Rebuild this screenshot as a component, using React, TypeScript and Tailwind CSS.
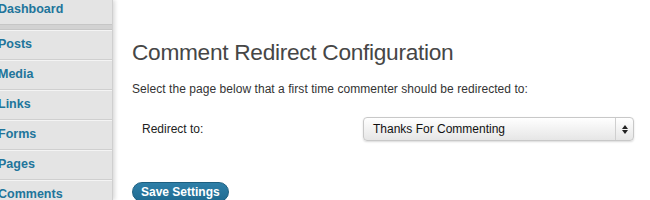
import React from 'react';

const menuItems = ['Posts', 'Media', 'Links', 'Forms', 'Pages', 'Comments'];

function Sidebar() {
  return (
    <div className="w-[113px] shrink-0 bg-[#e4e4e4] border-r border-[#cfcfcf] shadow-[2px_0_4px_rgba(0,0,0,0.15)] h-[200px] overflow-hidden">
      <div className="h-[24px] pb-[6px] flex items-center -ml-[2px] text-[12.5px] font-bold text-[#21759b]">Dashboard</div>
      <div className="h-[6px] bg-[#d2d2d2] border-t border-b border-[#c6c6c6]" />
      {menuItems.map((item) => (
        <div
          key={item}
          className="h-[30px] pb-[1px] flex items-center -ml-[2px] text-[12.5px] font-bold text-[#21759b] border-b border-[#cfcfcf] border-t border-t-[#f4f4f4]"
        >
          {item}
        </div>
      ))}
    </div>
  );
}

export default function App() {
  return (
    <div className="w-[650px] h-[200px] flex bg-white overflow-hidden" style={{ fontFamily: '"Liberation Sans", Arial, sans-serif' }}>
      <Sidebar />
      <div className="pl-[19px] pt-[38px] flex-1">
        <h2 className="text-[22.7px] leading-[28px] text-[#464646] font-normal tracking-[-0.3px]">Comment Redirect Configuration</h2>
        <p className="mt-[15px] text-[12px] leading-[16px] text-[#333] tracking-[0.05px]">
          Select the page below that a first time commenter should be redirected to:
        </p>
        <div className="mt-[20px] flex items-center h-[24px]">
          <span className="ml-[10px] w-[221px] text-[12px] text-[#222]">Redirect to:</span>
          <div className="w-[271px] h-[24px] flex items-center rounded-[4px] border border-[#c8c8c8] bg-gradient-to-b from-[#ffffff] to-[#e6e6e6] shadow-[0_1px_2px_rgba(0,0,0,0.15)]">
            <span className="flex-1 pl-[9px] text-[12px] text-[#111]">Thanks For Commenting</span>
            <div className="w-[18px] h-full border-l border-[#cfcfcf] flex flex-col items-center justify-center gap-[1px]">
              <svg width="6" height="4" viewBox="0 0 6 4"><path d="M3 0L6 4H0z" fill="#222" /></svg>
              <svg width="6" height="4" viewBox="0 0 6 4"><path d="M0 0H6L3 4z" fill="#222" /></svg>
            </div>
          </div>
        </div>
        <button className="mt-[41px] h-[20px] px-[8px] rounded-full bg-gradient-to-b from-[#2e7fa8] to-[#1f6b91] border border-[#1d5f80] text-white text-[12px] font-bold leading-[18px]">
          Save Settings
        </button>
      </div>
    </div>
  );
}
